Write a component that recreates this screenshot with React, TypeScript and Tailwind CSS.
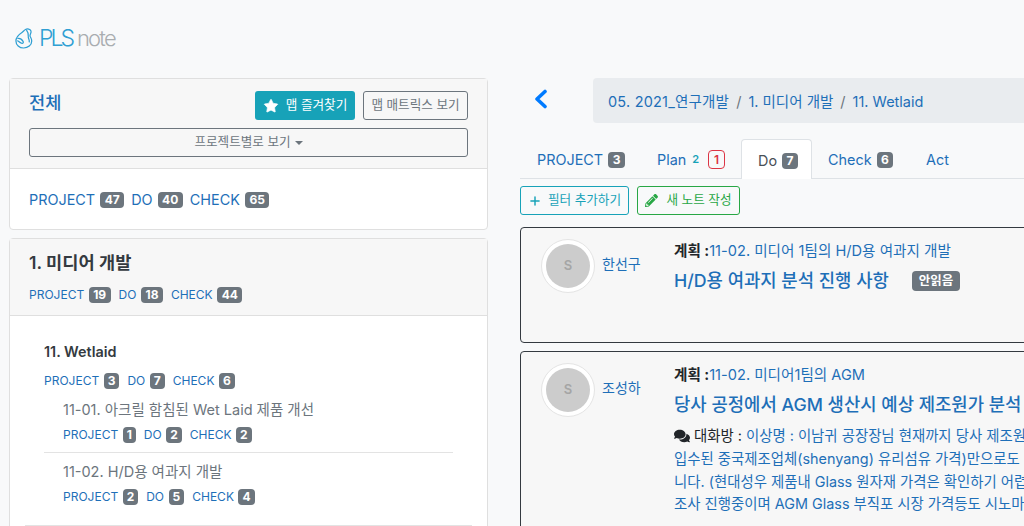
import { Star, Plus } from "lucide-react";
import { FaPencilAlt, FaComments } from "react-icons/fa";

function Badge({ n, className = "" }: { n: string | number; className?: string }) {
  return (
    <span className={`inline-flex items-center justify-center rounded-[4px] bg-[#6c757d] h-[16px] text-[12px] font-bold leading-none text-white ${className}`}>
      {n}
    </span>
  );
}

function Stats({ items, big = false }: { items: [string, string | number][]; big?: boolean }) {
  return (
    <div className={`flex items-center ${big ? "gap-[7px] text-[14.4px]" : "gap-[8px] text-[12px]"} text-[#1e6fb8]`}>
      {items.map(([l, n]) => (
        <span key={l} className={`flex items-center ${big ? "gap-[5px]" : "gap-[4.5px]"}`}>
          <span>{l}</span>
          <Badge n={n} className={String(n).length > 1 ? "px-[4.5px]" : "px-[4px]"} />
        </span>
      ))}
    </div>
  );
}

function Logo() {
  return (
    <div className="flex items-center h-[24px] gap-[5px]">
      <svg width="19" height="23" viewBox="0 0 20 22" fill="none" stroke="#2f9fd3" strokeWidth="1.3">
        <path d="M11 1.500c2-1 5-.5 5.800 1.500.700 1.900-1 3.400-1 5 0 1.600 1.800 2.800 1.800 5.500 0 4.500-4 7.500-8.500 7.500C4.500 21 1 17.800 1 13.500 1 9.500 4 7 7 5c1.800-1.200 2.500-2.700 4-3.500Z" />
        <path d="M2.500 11c2-.5 4.500.5 6 3 .8 1.300-.2 2.500-1.500 2-1.800-.7-3-2-4.500-3" />
        <path d="M12 2c1.500 2 2.500 4.500 2 7-.3 2 1.500 3 1 6" />
      </svg>
      <span className="text-[23px] leading-none font-light tracking-[-3px] text-[#2f9fd3]">PLS</span>
      <span className="text-[22px] leading-none font-light tracking-[-1.8px] text-[#a9adb0]">note</span>
    </div>
  );
}

function Card({ children, className = "" }: { children: React.ReactNode; className?: string }) {
  return <div className={`rounded-[4px] border border-[#dfdfdf] bg-white ${className}`}>{children}</div>;
}

function Avatar() {
  return (
    <div className="flex h-[54px] w-[54px] shrink-0 items-center justify-center rounded-full border border-[#e4e4e4] bg-white">
      <div className="flex h-[44px] w-[44px] items-center justify-center rounded-full bg-[#cccccc] text-[13px] font-semibold text-[#a5a5a5]">S</div>
    </div>
  );
}

function Tab({ children, active = false, className = "" }: { children: React.ReactNode; active?: boolean; className?: string }) {
  return (
    <div className={`flex items-center gap-[5px] pl-[16px] pt-[2px] text-[14.4px] ${active ? "relative z-10 -mb-px h-[40px] rounded-t-[4px] border border-b-0 border-[#dee2e6] bg-white text-[#495057]" : "h-[39px] text-[#1e6fb8]"} ${className}`}>
      {children}
    </div>
  );
}

export default function App() {
  return (
    <div
      className="h-[526px] w-[1024px] overflow-hidden bg-[#f8f9fa] text-[#212529]"
      style={{ fontFamily: 'Inter, "Noto Sans CJK KR", sans-serif' }}
    >
      <div className="flex h-[78px] items-center pl-[15px] pb-[2px]">
        <Logo />
      </div>
      <div className="flex">
        {/* left column */}
        <div className="ml-[9px] flex w-[479px] shrink-0 flex-col gap-[8px]">
          <Card>
            <div className="h-[90px] border-b border-[#dfdfdf] bg-[#f7f7f7] px-[19px] pt-[12px]">
              <div className="flex items-start justify-between">
                <div className="pt-[1px] text-[17.6px] font-medium leading-[22px] text-[#1e6fb8]">전체</div>
                <div className="flex gap-[8px]">
                  <div className="flex h-[29px] w-[100px] items-center justify-center gap-[7px] rounded-[3px] bg-[#17a2b8] text-[12.6px] text-white">
                    <Star size={16} fill="white" strokeWidth={1} />
                    <span>맵 즐겨찾기</span>
                  </div>
                  <div className="flex h-[29px] w-[105px] items-center justify-center rounded-[3px] border border-[#6c757d] text-[12.6px] text-[#6c757d]">
                    맵 매트릭스 보기
                  </div>
                </div>
              </div>
              <div className="mt-[8px] flex h-[29px] items-center justify-center gap-[4px] rounded-[3px] border border-[#6c757d] text-[12.6px] text-[#6c757d]">
                <span>프로젝트별로 보기</span>
                <span className="mt-[1px] h-0 w-0 border-x-[4px] border-t-[4px] border-x-transparent border-t-[#6c757d]" />
              </div>
            </div>
            <div className="flex h-[60px] items-center px-[19px] pt-[2px]">
              <Stats big items={[["PROJECT", 47], ["DO", 40], ["CHECK", 65]]} />
            </div>
          </Card>

          <Card className="h-[400px]">
            <div className="h-[77px] border-b border-[#dfdfdf] bg-[#f7f7f7] px-[19px] pt-[11px]">
              <div className="text-[17.6px] font-semibold leading-[26px] text-[#343a40]">1. 미디어 개발</div>
              <div className="mt-[10px]">
                <Stats items={[["PROJECT", 19], ["DO", 18], ["CHECK", 44]]} />
              </div>
            </div>
            <div className="px-[15px]">
              <div className="border-b border-[#e3e3e3] pb-[19px] pl-[19px] pr-[19px] pt-[25px]">
                <div className="text-[14.4px] font-semibold leading-[22px] text-[#343a40]">11. Wetlaid</div>
                <div className="mt-[9px]">
                  <Stats items={[["PROJECT", 3], ["DO", 7], ["CHECK", 6]]} />
                </div>
                <div className="border-b border-[#e3e3e3] pb-[8px] pl-[19px] pt-[9px]">
                  <div className="text-[14.5px] leading-[22px] text-[#6c757d]">11-01. 아크릴 함침된 Wet Laid 제품 개선</div>
                  <div className="mt-[5px]">
                    <Stats items={[["PROJECT", 1], ["DO", 2], ["CHECK", 2]]} />
                  </div>
                </div>
                <div className="pl-[19px] pt-[8px]">
                  <div className="text-[14.5px] leading-[22px] text-[#6c757d]">11-02. H/D용 여과지 개발</div>
                  <div className="mt-[5px]">
                    <Stats items={[["PROJECT", 2], ["DO", 5], ["CHECK", 4]]} />
                  </div>
                </div>
              </div>
            </div>
          </Card>
        </div>

        {/* right column */}
        <div className="ml-[32px] w-[560px] shrink-0">
          <div className="flex h-[45px] items-center">
            <svg width="14" height="20" viewBox="0 0 14 20" fill="none" stroke="#007bff" strokeWidth="3.6" strokeLinecap="round" strokeLinejoin="round" className="ml-[14px] mb-[3px] shrink-0">
              <polyline points="11,2.500 3,10 11,17.500" />
            </svg>
            <div className="ml-[45px] flex h-[45px] flex-1 items-center gap-[7px] rounded-[4px] bg-[#e9ecef] px-[15px] pt-[2px] text-[14.5px] text-[#1e6fb8]">
              <span className="tracking-[0.2px]">05. 2021_연구개발</span>
              <span className="text-[#6c757d]">/</span>
              <span>1. 미디어 개발</span>
              <span className="text-[#6c757d]">/</span>
              <span>11. Wetlaid</span>
            </div>
          </div>
          <div className="mt-[16px] flex h-[40px] items-end border-b border-[#dee2e6]">
            <Tab className="w-[121px] pl-[17px]">PROJECT <Badge n={3} className="px-[4.5px]" /></Tab>
            <Tab className="w-[100px]">
              Plan <span className="ml-[1px] text-[11px] font-semibold text-[#17a2b8]">2</span>
              <span className="ml-[4px] inline-flex h-[19px] w-[17px] items-center justify-center rounded-[4px] border border-[#dc3545] text-[12px] font-semibold text-[#dc3545]">1</span>
            </Tab>
            <Tab active className="w-[71px] pl-[15px]">Do <Badge n={7} className="px-[4.5px]" /></Tab>
            <Tab className="w-[98px]">Check <Badge n={6} className="px-[4.5px]" /></Tab>
            <Tab>Act</Tab>
          </div>
          <div className="mt-[7px] flex gap-[8px]">
            <div className="flex h-[29px] w-[109px] items-center justify-center gap-[6px] rounded-[3px] border border-[#17a2b8] text-[12.6px] text-[#17a2b8]">
              <Plus size={14} strokeWidth={2.5} />
              <span>필터 추가하기</span>
            </div>
            <div className="flex h-[29px] w-[103px] items-center justify-center gap-[8px] rounded-[3px] border border-[#28a745] text-[12.6px] text-[#28a745]">
              <FaPencilAlt size={13} />
              <span>새 노트 작성</span>
            </div>
          </div>

          <div className="mt-[12px] flex h-[116px] gap-[6px] rounded-[4px] border border-[#343a40] bg-[#f7f7f7] pl-[20px] pt-[11px]">
            <Avatar />
            <div className="ml-[1px] mt-[15px] w-[66px] shrink-0 text-[14px] leading-[20px] text-[#1e6fb8]">한선구</div>
            <div className="min-w-0">
              <div className="mt-[2px] text-[14.6px] leading-[21px] whitespace-nowrap">
                <span className="font-bold">계획 :</span><span className="text-[#1e6fb8]">11-02. 미디어 1팀의 H/D용 여과지 개발</span>
              </div>
              <div className="mt-[7px] flex items-center gap-[23px] whitespace-nowrap">
                <span className="text-[17.76px] font-medium leading-[24px] text-[#1e6fb8]">H/D용 여과지 분석 진행 사항</span>
                <span className="inline-flex h-[20px] items-center rounded-[4px] bg-[#6c757d] px-[7px] text-[12.5px] font-semibold text-white">안읽음</span>
              </div>
            </div>
          </div>

          <div className="mt-[8px] flex h-[200px] gap-[6px] rounded-[4px] border border-[#343a40] bg-[#f7f7f7] pl-[20px] pt-[11px]">
            <Avatar />
            <div className="ml-[1px] mt-[15px] w-[66px] shrink-0 text-[14px] leading-[20px] text-[#1e6fb8]">조성하</div>
            <div className="min-w-0 whitespace-nowrap">
              <div className="mt-[2px] text-[14.6px] leading-[21px]">
                <span className="font-bold">계획 :</span><span className="text-[#1e6fb8]">11-02. 미디어1팀의 AGM</span>
              </div>
              <div className="mt-[7px] text-[17.76px] font-medium leading-[24px] text-[#1e6fb8]">당사 공정에서 AGM 생산시 예상 제조원가 분석</div>
              <div className="mt-[7px] text-[14.4px] leading-[22.5px] text-[#1e6fb8]">
                <div className="flex h-[24px] items-center gap-[4px]">
                  <FaComments size={16} className="text-[#212529]" />
                  <span className="text-[#212529]">대화방 :</span>
                  <span>이상명 : 이남귀 공장장님 현재까지 당사 제조원</span>
                </div>
                <div>입수된 중국제조업체(shenyang) 유리섬유 가격)만으로도</div>
                <div>니다. (현대성우 제품내 Glass 원자재 가격은 확인하기 어렵</div>
                <div>조사 진행중이며 AGM Glass 부직포 시장 가격등도 시노마</div>
              </div>
            </div>
          </div>
        </div>
      </div>
    </div>
  );
}
